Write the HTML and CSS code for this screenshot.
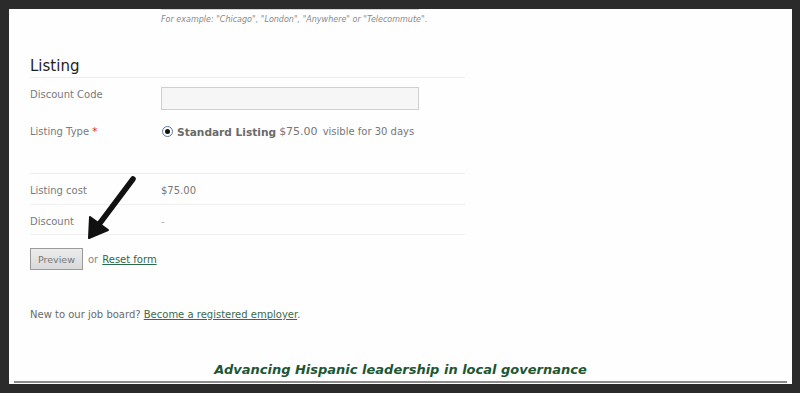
FILE: index.html
```html
<!DOCTYPE html>
<html lang="en">
<head>
  <meta charset="UTF-8" />
  <title>Post a Job - Listing</title>
  <link rel="stylesheet" href="styles.css">
</head>
<body>

<div class="page">
  <div class="form">
    <div class="row-top">
      <div></div>
      <div>
        <div class="prev-input"></div>
        <div class="hint">For example: "Chicago", "London", "Anywhere" or "Telecommute".</div>
      </div>
    </div>

    <h2 class="section">Listing</h2>

    <div class="row row-code">
      <label class="lbl">Discount Code</label>
      <input class="txt" type="text" />
    </div>

    <div class="row row-type">
      <label class="lbl">Listing Type <span class="req">*</span></label>
      <div class="choice">
        <span class="radio"><span class="dot"></span></span>
        <b>Standard Listing</b> <span class="price">$75.00</span> <span class="note">visible for 30 days</span>
      </div>
    </div>

    <div class="summary">
      <div class="row line">
        <span class="lbl">Listing cost</span>
        <span class="val">$75.00</span>
      </div>
      <div class="row line">
        <span class="lbl">Discount</span>
        <span class="val dim">-</span>
      </div>
    </div>

    <div class="actions">
      <button class="btn">Preview</button>
      <span class="or">or</span>
      <a href="#" class="link">Reset form</a>
    </div>

    <p class="signup">New to our job board? <a href="#" class="link">Become a registered employer</a>.</p>
  </div>

  <div class="footer">
    <div class="tagline">Advancing Hispanic leadership in local governance</div>
  </div>

  <!-- annotation arrow drawn over the form -->
  <svg class="arrow" width="60" height="72" viewBox="0 0 60 72">
    <line x1="54" y1="6" x2="18" y2="54" stroke="#111" stroke-width="5.5" stroke-linecap="round" />
    <polygon points="10,65 11,44 29,57" fill="#111" stroke="#111" stroke-width="2" stroke-linejoin="round" />
  </svg>
</div>

</body>
</html>
```

FILE: styles.css
```css
body {
  margin: 0;
  background: #2b2b2b;
  font-family: "DejaVu Sans", Verdana, sans-serif;
}
.page {
  position: relative;
  margin: 9px 8px 0 9px;
  height: 375px;
  background: #fefefe;
}
.form {
  width: 435px;
  padding-left: 21px;
}
.row-top {
  display: grid;
  grid-template-columns: 131px 1fr;
}
.prev-input {
  width: 258px;
  height: 1px;
  background: #d6d6d6;
}
.hint {
  margin-top: 5px;
  font-size: 8px;
  font-style: italic;
  color: #8a8a8a;
}
.section {
  margin: 33px 0 0;
  padding-bottom: 2px;
  font-size: 15px;
  font-weight: normal;
  color: #1e1e1e;
  border-bottom: 1px solid #ececec;
}
.row {
  display: grid;
  grid-template-columns: 131px 1fr;
  align-items: center;
}
.lbl {
  font-size: 10px;
  color: #7a7a7a;
}
.row-code {
  margin-top: 9px;
  align-items: start;
}
.row-code .lbl {
  padding-top: 2px;
}
.txt {
  width: 258px;
  height: 23px;
  box-sizing: border-box;
  margin: 0;
  background: #f6f6f6;
  border: 1px solid #cfcfcf;
}
.req {
  color: #e02020;
}
.row-type {
  margin-top: 15px;
}
.choice {
  font-size: 11px;
  color: #777;
  display: flex;
  align-items: center;
  gap: 3px;
}
.choice b {
  color: #6a6a6a;
  font-size: 10.6px;
}
.price {
  color: #777;
}
.note {
  font-size: 10px;
  margin-left: 2px;
}
.radio {
  width: 9px;
  height: 9px;
  border: 1px solid #5a7a9a;
  border-radius: 50%;
  display: inline-flex;
  align-items: center;
  justify-content: center;
  margin: 0 1px 0 1px;
}
.dot {
  width: 5px;
  height: 5px;
  border-radius: 50%;
  background: #111;
}
.summary {
  margin-top: 35px;
  border-top: 1px solid #ececec;
}
.line {
  height: 30px;
  padding-top: 3px;
  box-sizing: border-box;
  border-bottom: 1px solid #f0f0f0;
}
.line:first-child {
  height: 31px;
}
.val {
  font-size: 10px;
  color: #777;
}
.dim {
  color: #aaa;
}
.actions {
  margin-top: 13px;
  display: flex;
  align-items: center;
  gap: 4px;
}
.btn {
  width: 53px;
  height: 22px;
  padding: 0;
  margin-right: 1px;
  font-family: "DejaVu Sans", Verdana, sans-serif;
  font-size: 9.5px;
  color: #777;
  background: linear-gradient(#ececec, #d9d9d9);
  border: 1px solid #9a9a9a;
}
.or {
  font-size: 10px;
  color: #888;
}
.link {
  font-size: 10px;
  color: #2c6a4a;
}
.signup {
  margin: 39px 0 0;
  font-size: 10px;
  color: #6a6a6a;
}
.signup .link {
  font-size: 10px;
  color: #3a6a50;
}
.footer {
  margin: 42px 5px 0;
  border-bottom: 2px solid #8a8a8a;
  text-align: center;
}
.tagline {
  font-size: 13px;
  font-weight: bold;
  font-style: italic;
  color: #1d5633;
  padding-bottom: 4px;
}
.arrow {
  position: absolute;
  left: 70px;
  top: 164px;
}
```
